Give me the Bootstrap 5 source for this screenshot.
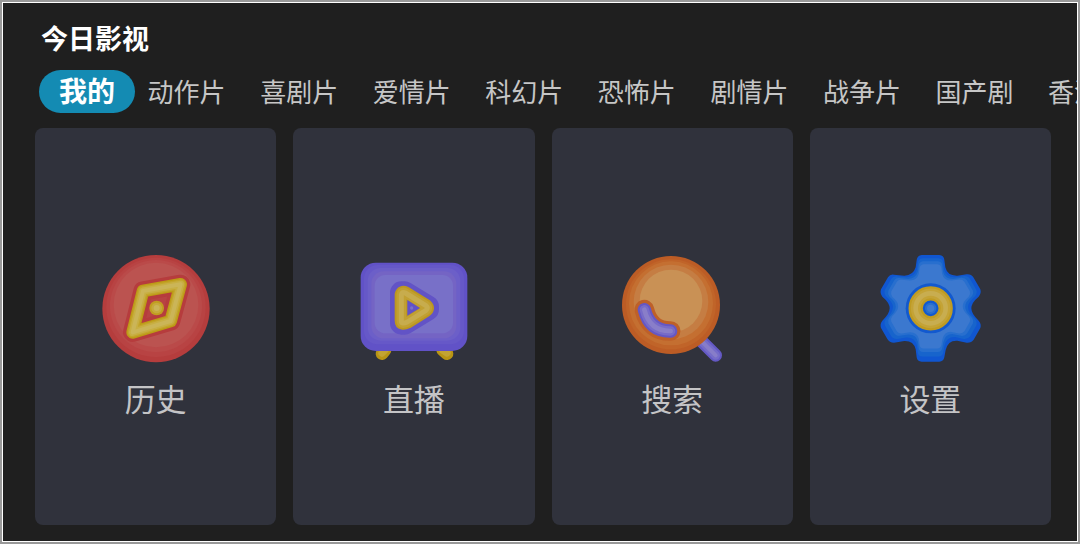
<!DOCTYPE html>
<html lang="zh-CN">
<head>
<meta charset="utf-8">
<meta name="viewport" content="width=device-width, initial-scale=1">
<title>今日影视</title>
<link href="https://cdn.jsdelivr.net/npm/bootstrap@5.3.0/dist/css/bootstrap.min.css" rel="stylesheet">
<style>
body { background: #fff; font-family: "Noto Sans CJK SC", sans-serif; }
.screen { border: 2px solid #999; padding: 1px; min-height: 100vh; }
.stage { background: #1f1f1f; padding: 15px 26px 16px 32px; }
.app-title { font-size: 27px; line-height: 40px; margin: 0 0 12px 6px; font-weight: 700; color: #fff; }
.tabs-row { gap: 3.2vw; height: 43px; margin: 0 -26px 15px 4px; }
.tab { border: 0; background: none; padding: 0 0 2px; font-size: 26px; line-height: 41px; color: #c6c6c6; }
.tab.active { background: #148bb3; color: #fff; font-size: 28px; font-weight: 700; border-radius: 22px; padding: 0 20px 2px; margin-right: -22px; }
.tiles { gap: 17px; }
.tile { flex: 1 1 0; background: #30323c; color: #c4c4c6; border-radius: 8px; font-size: 31px; line-height: 40px; padding: 14px 0 0; }
.tile svg { width: 120px; height: 120px; margin-bottom: 8px; }
</style>
</head>
<body>
<div class="screen d-flex">
<main class="stage d-flex flex-column flex-grow-1 overflow-hidden">
  <h1 class="app-title">今日影视</h1>
  <nav class="tabs-row d-flex align-items-center overflow-hidden text-nowrap" aria-label="分类">
    <button type="button" class="tab active flex-shrink-0">我的</button>
    <button type="button" class="tab flex-shrink-0">动作片</button>
    <button type="button" class="tab flex-shrink-0">喜剧片</button>
    <button type="button" class="tab flex-shrink-0">爱情片</button>
    <button type="button" class="tab flex-shrink-0">科幻片</button>
    <button type="button" class="tab flex-shrink-0">恐怖片</button>
    <button type="button" class="tab flex-shrink-0">剧情片</button>
    <button type="button" class="tab flex-shrink-0">战争片</button>
    <button type="button" class="tab flex-shrink-0">国产剧</button>
    <button type="button" class="tab flex-shrink-0">香港剧</button>
  </nav>
  <div class="tiles d-flex flex-grow-1">
    <button type="button" class="tile btn border-0 d-flex flex-column align-items-center justify-content-center">
      <svg viewBox="0 0 360 360" aria-hidden="true" stroke-linejoin="round">
        <circle cx="180" cy="176" r="161" fill="#b53d3d"/>
        <circle cx="180" cy="172" r="149" fill="#b84343"/>
        <circle cx="180" cy="168" r="138" fill="#ba4a49"/>
        <circle cx="180" cy="165" r="127" fill="#bb5350"/>
        <g fill="none">
          <path d="M141 123 L254 103 L224 213 L110 247 Z" fill="#b84343" stroke="#b63c3d" stroke-width="58"/>
          <path d="M141 123 L254 103 L224 213 L110 247 Z" stroke="#bd9b15" stroke-width="38"/>
          <path d="M141 123 L254 103 L224 213 L110 247 Z" stroke="#c3a42b" stroke-width="30"/>
          <path d="M141 123 L254 103 L224 213 L110 247 Z" stroke="#c8af43" stroke-width="22"/>
          <path d="M141 123 L254 103 L224 213 L110 247 Z" stroke="#cbb558" stroke-width="12"/>
        </g>
        <circle cx="182" cy="174" r="22" fill="#c19e20"/>
        <circle cx="182" cy="174" r="16" fill="#c6aa3c"/>
        <circle cx="182" cy="174" r="9" fill="#cbb558"/>
      </svg>
      历史
    </button>
    <button type="button" class="tile btn border-0 d-flex flex-column align-items-center justify-content-center">
      <svg viewBox="0 0 360 360" aria-hidden="true" stroke-linejoin="round" stroke-linecap="round">
        <path d="M93 300 L84 311 M266 300 L279 311" stroke="#b99514" stroke-width="38"/>
        <path d="M93 300 L84 309 M266 300 L279 309" stroke="#c3a333" stroke-width="22"/>
        <rect x="20" y="38" width="320" height="265" rx="45" fill="#6152c7"/>
        <rect x="30" y="45" width="300" height="238" rx="41" fill="#6658c8"/>
        <rect x="41" y="54" width="278" height="218" rx="39" fill="#6c5fc8"/>
        <rect x="52" y="64" width="255" height="201" rx="37" fill="#7464c4"/>
        <rect x="62" y="75" width="235" height="175" rx="32" fill="#7870c8"/>
        <path d="M142 128 L152 128 L221 170 L221 178 L152 220 L142 220 Z" fill="#6152c7" stroke="#6253c6" stroke-width="68"/>
        <g fill="none">
          <path d="M142 134 Q144 124 154 129 L216 167 Q224 174 216 181 L160 216 Q142 224 142 212 Z" stroke="#bc9720" stroke-width="40"/>
          <path d="M142 134 Q144 124 154 129 L216 167 Q224 174 216 181 L160 216 Q142 224 142 212 Z" stroke="#c1a032" stroke-width="29"/>
          <path d="M142 134 Q144 124 154 129 L216 167 Q224 174 216 181 L160 216 Q142 224 142 212 Z" stroke="#c7ac4d" stroke-width="15"/>
        </g>
        <path d="M160 150 L198 174 L160 197 Z" fill="#6152c7"/>
        <circle cx="173" cy="174" r="5" fill="#7870c8"/>
      </svg>
      直播
    </button>
    <button type="button" class="tile btn border-0 d-flex flex-column align-items-center justify-content-center">
      <svg viewBox="0 0 360 360" aria-hidden="true" fill="none" stroke-linecap="round">
        <path d="M265 270 L311 316" stroke="#6459c4" stroke-width="38"/>
        <path d="M265 270 L311 316" stroke="#756cc9" stroke-width="26"/>
        <path d="M265 270 L311 316" stroke="#877dc9" stroke-width="12"/>
        <circle cx="177" cy="165" r="147" fill="#bc5c25"/>
        <circle cx="177" cy="163" r="135" fill="#c06429"/>
        <circle cx="177" cy="160" r="126" fill="#c46f31"/>
        <circle cx="177" cy="156" r="112" fill="#c57d43"/>
        <circle cx="177" cy="153" r="94" fill="#c99155"/>
        <path d="M97 179 Q113 244 176 243" stroke="#be6029" stroke-width="59"/>
        <path d="M97 179 Q113 244 176 243" stroke="#6557c4" stroke-width="40"/>
        <path d="M97 179 Q113 244 176 243" stroke="#776bc8" stroke-width="28"/>
        <path d="M97 179 Q113 244 176 243" stroke="#897ec9" stroke-width="14"/>
      </svg>
      搜索
    </button>
    <button type="button" class="tile btn border-0 d-flex flex-column align-items-center justify-content-center">
      <svg viewBox="0 0 360 360" aria-hidden="true">
        <defs>
          <path id="gear" d="M155 15 H208 Q222 17 223 30 L226 52 Q232 78 262 77 L290 73 Q304 72 310 82 L331 118 Q335 130 326 140 Q304 158 304 175 Q304 192 326 212 Q335 222 331 234 L311 269 Q304 279 290 278 L262 272 Q234 270 227 300 L223 322 Q220 335 208 335 H155 Q142 335 140 322 L137 298 Q131 272 103 273 L72 278 Q58 278 52 267 L33 234 Q29 222 37 212 Q59 192 59 175 Q59 158 37 140 Q29 130 33 118 L54 82 Q60 72 72 74 L103 77 Q130 76 137 52 L140 30 Q142 17 155 15 Z"/>
        </defs>
        <use href="#gear" fill="#1056d0"/>
        <use href="#gear" fill="#1764cc" transform="translate(181 172) scale(.92) translate(-181 -175)"/>
        <use href="#gear" fill="#286fce" transform="translate(181 170) scale(.85) translate(-181 -175)"/>
        <use href="#gear" fill="#3b78cf" transform="translate(181 169) scale(.79) translate(-181 -175)"/>
        <circle cx="182" cy="175" r="75" fill="#1259cf"/>
        <g fill="none">
          <circle cx="182" cy="175" r="45" stroke="#bf9b22" stroke-width="43"/>
          <circle cx="182" cy="175" r="45" stroke="#c4a336" stroke-width="29"/>
          <circle cx="182" cy="175" r="45" stroke="#c8ad50" stroke-width="14"/>
        </g>
        <circle cx="182" cy="175" r="17" fill="#286fce"/>
        <circle cx="182" cy="175" r="11" fill="#3f7acd"/>
      </svg>
      设置
    </button>
  </div>
</main>
</div>
<script src="https://cdn.jsdelivr.net/npm/bootstrap@5.3.0/dist/js/bootstrap.bundle.min.js"></script>
</body>
</html>
